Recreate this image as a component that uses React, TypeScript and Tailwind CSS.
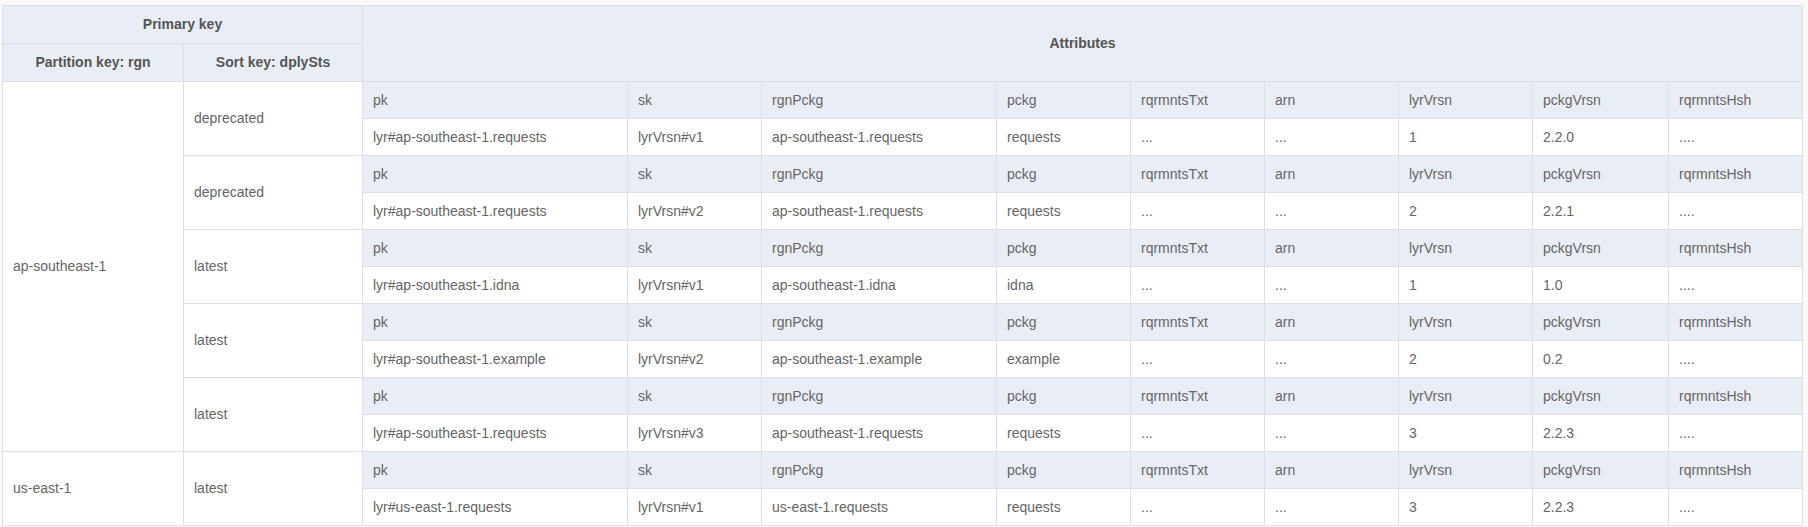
const attrs = ['pk', 'sk', 'rgnPckg', 'pckg', 'rqrmntsTxt', 'arn', 'lyrVrsn', 'pckgVrsn', 'rqrmntsHsh'];

const items = [
  { rgn: 'ap-southeast-1', sts: 'deprecated', vals: ['lyr#ap-southeast-1.requests', 'lyrVrsn#v1', 'ap-southeast-1.requests', 'requests', '...', '...', '1', '2.2.0', '....'] },
  { rgn: 'ap-southeast-1', sts: 'deprecated', vals: ['lyr#ap-southeast-1.requests', 'lyrVrsn#v2', 'ap-southeast-1.requests', 'requests', '...', '...', '2', '2.2.1', '....'] },
  { rgn: 'ap-southeast-1', sts: 'latest', vals: ['lyr#ap-southeast-1.idna', 'lyrVrsn#v1', 'ap-southeast-1.idna', 'idna', '...', '...', '1', '1.0', '....'] },
  { rgn: 'ap-southeast-1', sts: 'latest', vals: ['lyr#ap-southeast-1.example', 'lyrVrsn#v2', 'ap-southeast-1.example', 'example', '...', '...', '2', '0.2', '....'] },
  { rgn: 'ap-southeast-1', sts: 'latest', vals: ['lyr#ap-southeast-1.requests', 'lyrVrsn#v3', 'ap-southeast-1.requests', 'requests', '...', '...', '3', '2.2.3', '....'] },
  { rgn: 'us-east-1', sts: 'latest', vals: ['lyr#us-east-1.requests', 'lyrVrsn#v1', 'us-east-1.requests', 'requests', '...', '...', '3', '2.2.3', '....'] },
];

const widths = [181, 179, 265, 134, 235, 134, 134, 134, 134, 136, 134];

const cell = 'border border-[#dcdfe6] px-[10px] text-left align-middle font-normal';
const head = 'border border-[#dcdfe6] bg-[#e9edf5] text-center font-bold text-[#555]';

export default function App() {
  return (
    <div className="min-h-[527px] w-[1808px] bg-[#fafafa] pt-[5px] pl-[2px] font-['Liberation_Sans',Arial,sans-serif] text-[14px] text-[#666]">
      <table className="w-[1800px] table-fixed border-collapse bg-white">
        <colgroup>
          {widths.map((w, i) => (
            <col key={i} style={{ width: w }} />
          ))}
        </colgroup>
        <thead>
          <tr className="h-[38px]">
            <th colSpan={2} className={head}>Primary key</th>
            <th colSpan={9} rowSpan={2} className={head}>Attributes</th>
          </tr>
          <tr className="h-[38px]">
            <th className={head}>Partition key: rgn</th>
            <th className={head}>Sort key: dplySts</th>
          </tr>
        </thead>
        <tbody>
          {items.map((it, i) => {
            const first = i === 0 || items[i - 1].rgn !== it.rgn;
            const span = items.filter((x) => x.rgn === it.rgn).length * 2;
            return [
              <tr key={i + 'a'} className="h-[37px]">
                {first && (
                  <td rowSpan={span} className={cell + ' bg-white'}>{it.rgn}</td>
                )}
                <td rowSpan={2} className={cell + ' bg-white'}>{it.sts}</td>
                {attrs.map((a) => (
                  <td key={a} className={cell + ' bg-[#e9edf5]'}>{a}</td>
                ))}
              </tr>,
              <tr key={i + 'b'} className="h-[37px]">
                {it.vals.map((v, j) => (
                  <td key={j} className={cell + ' bg-white'}>{v}</td>
                ))}
              </tr>,
            ];
          })}
        </tbody>
      </table>
    </div>
  );
}
